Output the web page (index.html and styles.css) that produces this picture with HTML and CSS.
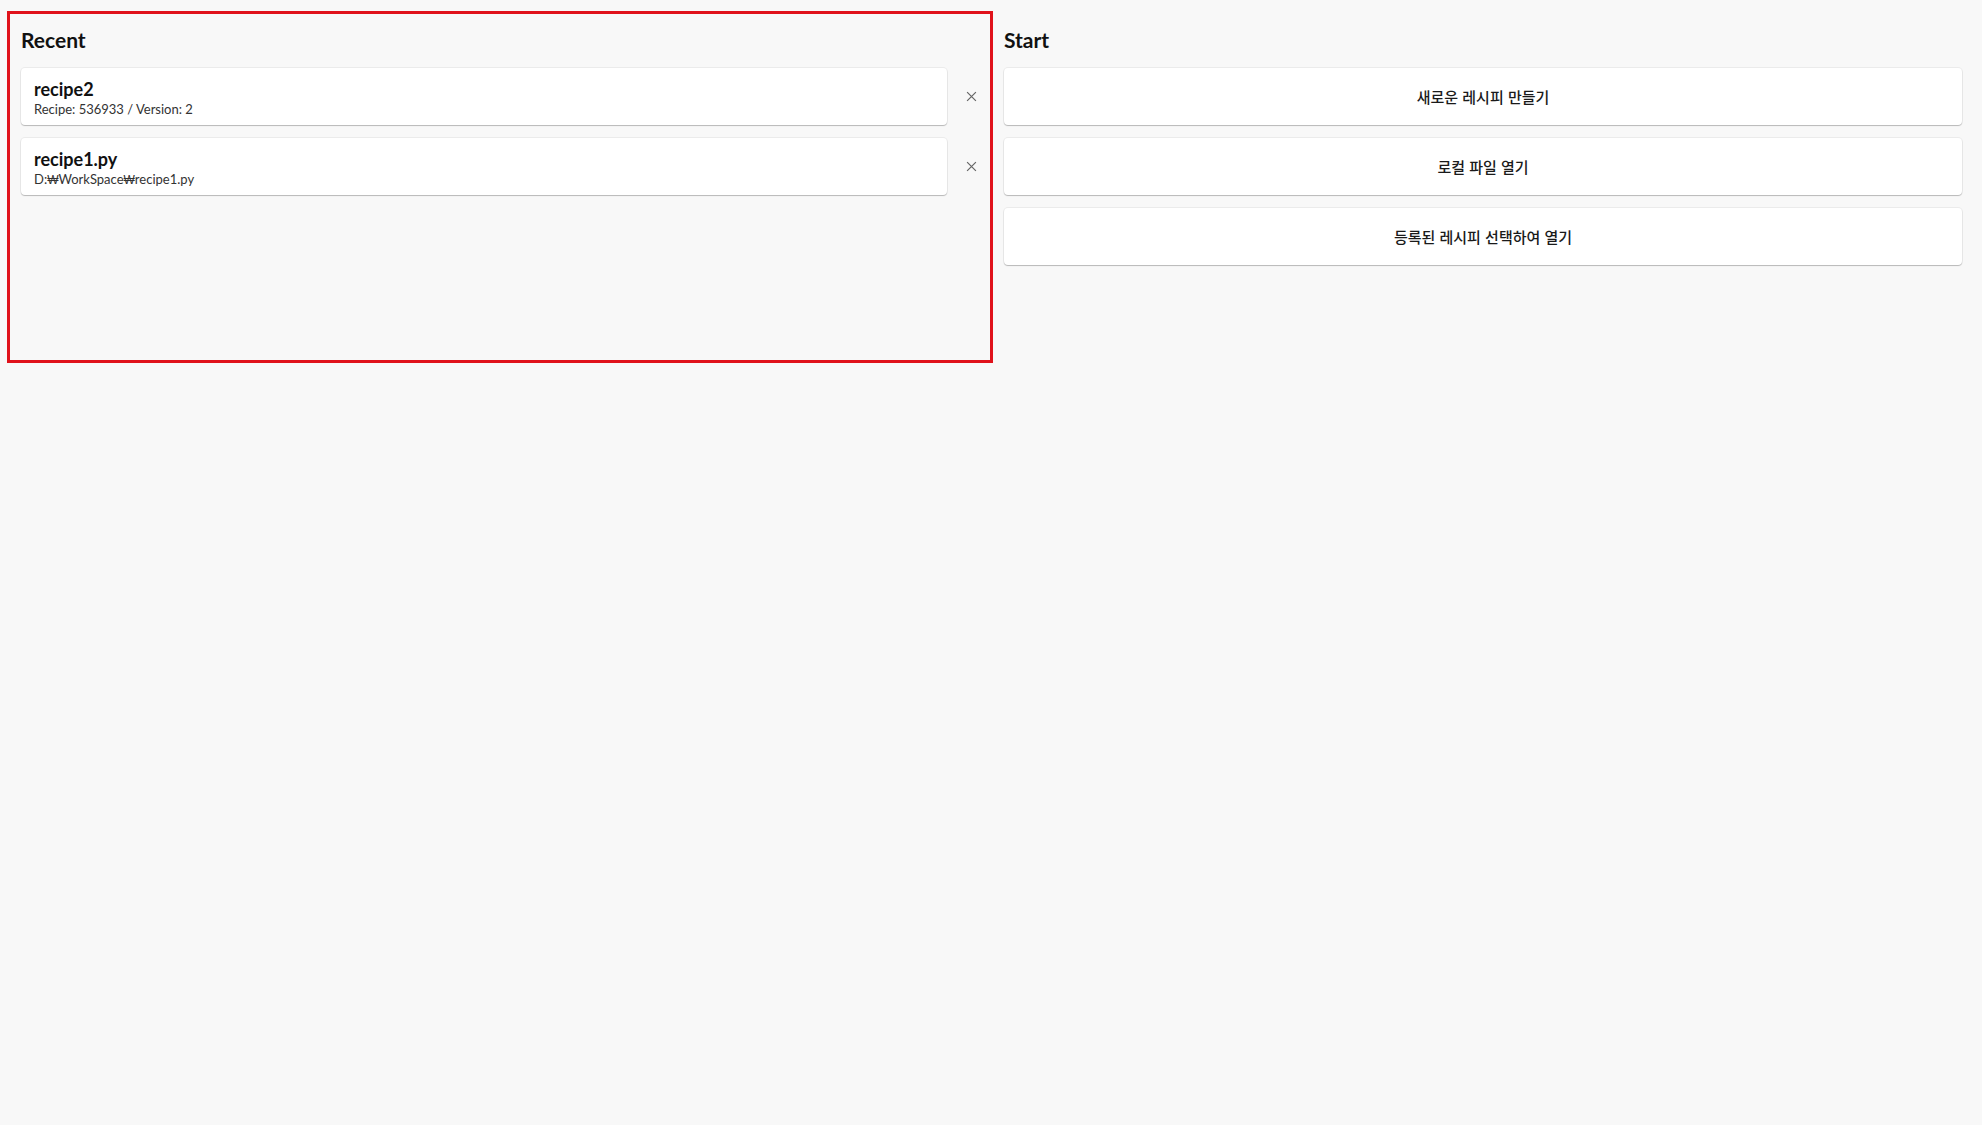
FILE: index.html
```html
<!DOCTYPE html>
<html lang="ko">

<head>
    <meta charset="UTF-8">
    <meta name="viewport" content="width=device-width, initial-scale=1.0">
    <title>Recipe Editor</title>
    <link rel="stylesheet" href="styles.css">
</head>

<body>
    <div class="page">
        <section class="recent">
            <h2 class="section-title">Recent</h2>
            <div class="recent-list">
                <div class="recent-row">
                    <div class="card recent-card">
                        <span class="recent-name">recipe2</span>
                        <span class="recent-info">Recipe: 536933 / Version: 2</span>
                    </div>
                    <button class="close-btn" title="Remove">
                        <svg width="11" height="11" viewBox="0 0 10 10">
                            <path d="M1 1 L9 9 M9 1 L1 9" stroke="#666" stroke-width="1.1" fill="none" />
                        </svg>
                    </button>
                </div>
                <div class="recent-row">
                    <div class="card recent-card">
                        <span class="recent-name">recipe1.py</span>
                        <span class="recent-info">D:<span class="won">₩</span>WorkSpace<span class="won">₩</span>recipe1.py</span>
                    </div>
                    <button class="close-btn" title="Remove">
                        <svg width="11" height="11" viewBox="0 0 10 10">
                            <path d="M1 1 L9 9 M9 1 L1 9" stroke="#666" stroke-width="1.1" fill="none" />
                        </svg>
                    </button>
                </div>
            </div>
        </section>

        <section class="start">
            <h2 class="section-title">Start</h2>
            <div class="start-list">
                <button class="card start-btn">새로운 레시피 만들기</button>
                <button class="card start-btn">로컬 파일 열기</button>
                <button class="card start-btn">등록된 레시피 선택하여 열기</button>
            </div>
        </section>
    </div>
</body>

</html>
```

FILE: styles.css
```css
body {
    margin: 0;
    font-family: Lato, 'Noto Sans CJK KR', sans-serif;
    background-color: #f8f8f8;
    color: #111;
}

.page {
    display: grid;
    grid-template-columns: 986px 1fr;
    column-gap: 11px;
    padding: 11px 20px 0 7px;
}

.section-title {
    margin: 0 0 14px;
    font-size: 21px;
    line-height: 28px;
    font-weight: 700;
    color: #111;
}

.recent {
    box-sizing: border-box;
    height: 352px;
    border: 3px solid #e0121b;
    padding: 12px 0 0 11px;
}

.start {
    padding-top: 15px;
}

.recent-list,
.start-list {
    display: flex;
    flex-direction: column;
    gap: 13px;
}

.recent-row {
    display: flex;
    align-items: center;
}

.card {
    box-sizing: border-box;
    height: 57px;
    background: white;
    border: none;
    border-radius: 4px;
    box-shadow: 0 1px 1px rgba(0, 0, 0, 0.22), 0 0 0 1px rgba(0, 0, 0, 0.05);
}

.recent-card {
    flex: 1;
    display: flex;
    flex-direction: column;
    padding: 10px 13px 0;
}

.recent-name {
    font-size: 18px;
    line-height: 22px;
    font-weight: 700;
    color: #111;
}

.recent-info {
    margin-top: 1px;
    font-size: 13px;
    line-height: 17px;
    color: #333;
}

.won {
    font-family: 'Liberation Sans', sans-serif;
    font-size: 12px;
}

.close-btn {
    width: 43px;
    height: 57px;
    padding: 0 0 0 5px;
    border: none;
    background: none;
    display: flex;
    align-items: center;
    justify-content: center;
    cursor: pointer;
}

.start-btn {
    width: 100%;
    font-family: 'Noto Sans CJK KR', sans-serif;
    font-size: 15px;
    font-weight: 500;
    color: #1a1a1a;
    cursor: pointer;
}
```
